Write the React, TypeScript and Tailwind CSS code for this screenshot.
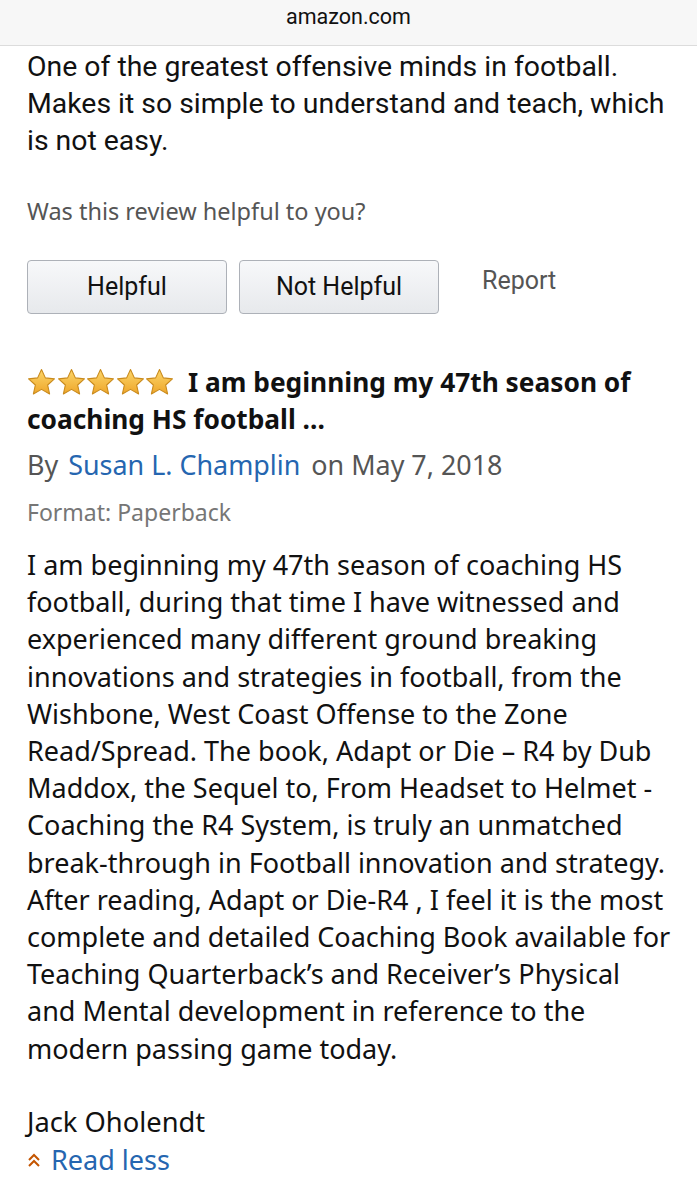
import React from "react";

const Star = () => (
  <svg width="29" height="28" viewBox="0 0 24 23" className="shrink-0">
    <defs>
      <linearGradient id="starGrad" x1="0" y1="0" x2="0" y2="1">
        <stop offset="0%" stopColor="#fcd66a" />
        <stop offset="100%" stopColor="#eea62a" />
      </linearGradient>
    </defs>
    <path
      d="M12 1.2l3.2 6.9 7.5.8-5.6 5.1 1.6 7.4L12 17.6l-6.7 3.8 1.6-7.4L1.3 8.9l7.5-.8z"
      fill="url(#starGrad)"
      stroke="#c98a1c"
      strokeWidth="0.9"
      strokeLinejoin="round"
    />
  </svg>
);

const bodyLines = [
  "I am beginning my 47th season of coaching HS",
  "football, during that time I have witnessed and",
  "experienced many different ground breaking",
  "innovations and strategies in football, from the",
  "Wishbone, West Coast Offense to the Zone",
  "Read/Spread. The book, Adapt or Die – R4 by Dub",
  "Maddox, the Sequel to, From Headset to Helmet -",
  "Coaching the R4 System, is truly an unmatched",
  "break-through in Football innovation and strategy.",
  "After reading, Adapt or Die-R4 , I feel it is the most",
  "complete and detailed Coaching Book available for",
  "Teaching Quarterback’s and Receiver’s Physical",
  "and Mental development in reference to the",
  "modern passing game today.",
];

export default function App() {
  return (
    <div className="w-[697px] min-h-[1200px] bg-white text-[#111] font-['Noto_Sans',sans-serif] whitespace-nowrap">
      {/* Browser address bar */}
      <div className="h-[46px] bg-[#f7f7f7] border-b border-[#dcdcdc] flex justify-center pt-[4px]">
        <span className="text-[21.5px] leading-[26px] text-[#111] font-['Roboto',sans-serif]">amazon.com</span>
      </div>

      <div className="px-[27px]">
        <p className="mt-[2px] text-[28.4px] leading-[37px] font-['Roboto',sans-serif]">
          One of the greatest offensive minds in football.
          <br />
          Makes it so simple to understand and teach, which
          <br />
          is not easy.
        </p>

        <p className="mt-[38px] text-[23.5px] leading-[28px] text-[#555]">Was this review helpful to you?</p>

        <div className="mt-[35px] flex items-start">
          <button className="w-[200px] h-[54px] rounded-[4px] border border-[#adb1b8] bg-gradient-to-b from-[#f7f8fa] to-[#e7e9ec] text-[25px] text-[#111] font-['Roboto',sans-serif]">
            Helpful
          </button>
          <button className="ml-[12px] w-[200px] h-[54px] rounded-[4px] border border-[#adb1b8] bg-gradient-to-b from-[#f7f8fa] to-[#e7e9ec] text-[25px] text-[#111] font-['Roboto',sans-serif]">
            Not Helpful
          </button>
          <span className="ml-[43px] mt-[6px] text-[25px] leading-[30px] text-[#555] font-['Roboto',sans-serif]">Report</span>
        </div>

        <div className="mt-[50px] text-[26.3px] leading-[37px] font-bold">
          <span className="inline-flex gap-[0.5px] align-[-4px] mr-[14px]">
            <Star />
            <Star />
            <Star />
            <Star />
            <Star />
          </span>
          I am beginning my 47th season of
          <br />
          coaching HS football ...
        </div>

        <div className="mt-[8px] text-[26.9px] leading-[37px] text-[#555]">
          By <span className="ml-[3px] text-[#2566b0]">Susan L. Champlin</span>{" "}
          <span className="ml-[4px]">on May 7, 2018</span>
        </div>

        <div className="mt-[13.5px] text-[23px] leading-[30px] text-[#767676]">Format: Paperback</div>

        <p className="mt-[19.5px] text-[27px] leading-[37.2px]">
          {bodyLines.map((l, i) => (
            <React.Fragment key={i}>
              {l}
              {i < bodyLines.length - 1 && <br />}
            </React.Fragment>
          ))}
        </p>

        <p className="mt-[36px] text-[27.3px] leading-[37.2px]">Jack Oholendt</p>
        <div className="mt-[1px] flex items-center text-[27px] leading-[37.2px]">
          <svg width="14" height="17" viewBox="0 0 14 17" className="mr-[10px]">
            <path d="M2 9l5-5 5 5M2 15l5-5 5 5" fill="none" stroke="#c45500" strokeWidth="2" />
          </svg>
          <span className="text-[#2566b0]">Read less</span>
        </div>
      </div>
    </div>
  );
}
